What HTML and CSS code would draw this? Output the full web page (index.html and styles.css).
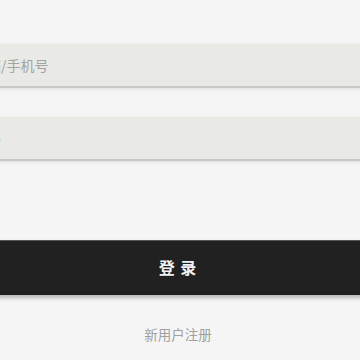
FILE: index.html
```html
<!DOCTYPE html>
<html lang="zh-CN">
<head>
    <meta charset="UTF-8">
    <meta name="viewport" content="width=device-width, initial-scale=1.0">
    <title>登录</title>
    <link rel="stylesheet" href="styles.css">
</head>
<body>

    <div class="login-page">
        <form class="login-form" id="loginForm">
            <div class="form-group">
                <input type="text" class="form-input" placeholder="邮箱/手机号">
            </div>
            <div class="form-group">
                <input type="password" class="form-input" placeholder="密码">
            </div>
            <button type="submit" class="login-btn">登 录</button>
            <a href="#" class="register-link">新用户注册</a>
        </form>
    </div>

</body>
</html>
```

FILE: styles.css
```css
/* Page */
body {
    margin: 0;
    padding: 0;
    background-color: #f5f5f5;
    font-family: "Noto Sans CJK SC", "Noto Sans", sans-serif;
    overflow: hidden;
}

.login-page {
    width: 360px;
    height: 360px;
    overflow: hidden;
}

.login-form {
    width: 440px;
    margin-left: -42px;
    padding-top: 43px;
    display: flex;
    flex-direction: column;
}

.form-group {
    margin-bottom: 28px;
}

.form-input {
    display: block;
    box-sizing: border-box;
    width: 100%;
    height: 45px;
    padding: 0 15px;
    border: none;
    border-top: 1px solid #f0f0ee;
    border-bottom: 2px solid #c9cac6;
    background-color: #e9eae6;
    font-family: inherit;
    font-size: 14px;
    color: #333;
    outline: none;
    box-shadow: 0 2px 2px rgba(0, 0, 0, 0.06);
}

.form-input::placeholder {
    color: #a3a3a3;
}

.login-btn {
    margin-top: 51px;
    height: 55px;
    padding: 0 0 3px;
    border: none;
    border-top: 1px solid #555;
    background-color: #212121;
    color: #f2f2f2;
    font-family: inherit;
    font-size: 16px;
    font-weight: bold;
    letter-spacing: 1px;
    cursor: pointer;
    box-shadow: 0 3px 4px rgba(0, 0, 0, 0.25);
}

.register-link {
    margin-top: 29px;
    text-align: center;
    font-size: 13.5px;
    color: #a0a0a0;
    text-decoration: none;
}
```
